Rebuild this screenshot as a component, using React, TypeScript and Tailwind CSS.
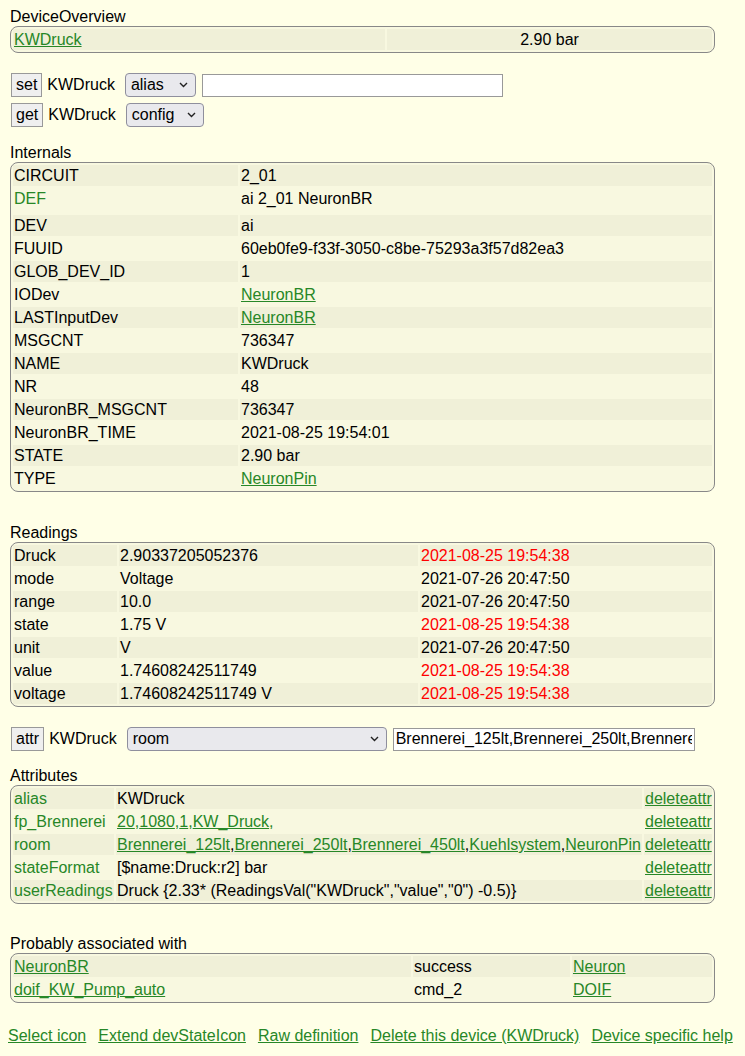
import React from "react";

const LINK = "text-[#278727] underline";
const CELL = "h-[21px] px-[1px] py-0 leading-[21px] whitespace-nowrap overflow-hidden align-middle";

function Heading({ children }: { children: React.ReactNode }) {
  return <div className="leading-[18px]">{children}</div>;
}

function Block({ children }: { children: React.ReactNode }) {
  return (
    <table className="w-[705px] table-fixed border-separate border-spacing-[2px] rounded-[8px] border border-[#888] bg-[#F8F8E0]">
      <tbody>{children}</tbody>
    </table>
  );
}

function rowBg(i: number) {
  return i % 2 === 0 ? "bg-[#F0F0D8]" : "bg-[#F8F8E0]";
}

function Chevron() {
  return (
    <svg width="9" height="6" viewBox="0 0 9 6" className="shrink-0">
      <path d="M1 1l3.5 3.5L8 1" fill="none" stroke="#222" strokeWidth="1.4" />
    </svg>
  );
}

function Select({ value, width }: { value: string; width: string }) {
  return (
    <div
      className={`flex h-[24px] items-center justify-between rounded-[4px] border border-[#8f8f9d] bg-[#e9e9ed] pl-[5px] pr-[7px] ${width}`}
    >
      <span>{value}</span>
      <Chevron />
    </div>
  );
}

function Btn({ label }: { label: string }) {
  return (
    <button className="ml-[1px] h-[24px] border border-[#999] bg-[#efefef] px-[4px] leading-[22px]">
      {label}
    </button>
  );
}

const internals: [string, React.ReactNode][] = [
  ["CIRCUIT", "2_01"],
  ["DEF", "ai 2_01 NeuronBR"],
  ["DEV", "ai"],
  ["FUUID", "60eb0fe9-f33f-3050-c8be-75293a3f57d82ea3"],
  ["GLOB_DEV_ID", "1"],
  ["IODev", <a className={LINK}>NeuronBR</a>],
  ["LASTInputDev", <a className={LINK}>NeuronBR</a>],
  ["MSGCNT", "736347"],
  ["NAME", "KWDruck"],
  ["NR", "48"],
  ["NeuronBR_MSGCNT", "736347"],
  ["NeuronBR_TIME", "2021-08-25 19:54:01"],
  ["STATE", "2.90 bar"],
  ["TYPE", <a className={LINK}>NeuronPin</a>],
];

const readings: [string, string, string, boolean][] = [
  ["Druck", "2.90337205052376", "2021-08-25 19:54:38", true],
  ["mode", "Voltage", "2021-07-26 20:47:50", false],
  ["range", "10.0", "2021-07-26 20:47:50", false],
  ["state", "1.75 V", "2021-08-25 19:54:38", true],
  ["unit", "V", "2021-07-26 20:47:50", false],
  ["value", "1.74608242511749", "2021-08-25 19:54:38", true],
  ["voltage", "1.74608242511749 V", "2021-08-25 19:54:38", true],
];

const attributes: [string, React.ReactNode][] = [
  ["alias", "KWDruck"],
  [
    "fp_Brennerei",
    <span className="text-[#278727]">
      <a className="underline">20</a>,<a className="underline">1080</a>,<a className="underline">1</a>,
      <a className="underline">KW_Druck</a>,
    </span>,
  ],
  [
    "room",
    <span>
      <a className={LINK}>Brennerei_125lt</a>,<a className={LINK}>Brennerei_250lt</a>,
      <a className={LINK}>Brennerei_450lt</a>,<a className={LINK}>Kuehlsystem</a>,
      <a className={LINK}>NeuronPin</a>
    </span>,
  ],
  ["stateFormat", "[$name:Druck:r2] bar"],
  ["userReadings", 'Druck {2.33* (ReadingsVal("KWDruck","value","0") -0.5)}'],
];

const associated: [string, string, string][] = [
  ["NeuronBR", "success", "Neuron"],
  ["doif_KW_Pump_auto", "cmd_2", "DOIF"],
];

export default function App() {
  return (
    <div className="min-h-[1056px] bg-[#FFFFE7] pl-[10px] pt-[8px] font-['Liberation_Sans',Arial,sans-serif] text-[16px] text-black">
      <Heading>DeviceOverview</Heading>
      <Block>
        <tr>
          <td className={`${CELL} w-[372px] bg-[#F0F0D8]`}>
            <a className={LINK}>KWDruck</a>
          </td>
          <td className={`${CELL} bg-[#F0F0D8] text-center`}>2.90 bar</td>
        </tr>
      </Block>

      <div className="mt-[20px] flex h-[24px] items-center">
        <Btn label="set" />
        <span className="ml-[5px]">KWDruck</span>
        <div className="ml-[10px]">
          <Select value="alias" width="w-[71px]" />
        </div>
        <input
          className="ml-[6px] h-[23px] w-[301px] border border-[#999] bg-white px-[2px]"
          defaultValue=""
        />
      </div>
      <div className="mt-[6px] flex h-[24px] items-center">
        <Btn label="get" />
        <span className="ml-[5px]">KWDruck</span>
        <div className="ml-[10px]">
          <Select value="config" width="w-[78px]" />
        </div>
      </div>

      <div className="mt-[17px]">
        <Heading>Internals</Heading>
      </div>
      <Block>
        {internals.map(([k, v], i) => (
          <tr key={k}>
            <td
              className={`${CELL} ${k === "DEF" ? "h-[25px] align-top text-[#278727]" : ""} w-[225px] ${rowBg(i)}`}
            >
              {k}
            </td>
            <td className={`${CELL} ${k === "DEF" ? "h-[25px] align-top" : ""} ${rowBg(i)}`}>{v}</td>
          </tr>
        ))}
      </Block>

      <div className="mt-[32px]">
        <Heading>Readings</Heading>
      </div>
      <Block>
        {readings.map(([k, v, t, red], i) => (
          <tr key={k}>
            <td className={`${CELL} w-[104px] ${rowBg(i)}`}>{k}</td>
            <td className={`${CELL} w-[299px] ${rowBg(i)}`}>{v}</td>
            <td className={`${CELL} ${rowBg(i)} ${red ? "text-[#ff0000]" : ""}`}>{t}</td>
          </tr>
        ))}
      </Block>

      <div className="mt-[20px] flex h-[24px] items-center">
        <Btn label="attr" />
        <span className="ml-[5px]">KWDruck</span>
        <div className="ml-[10px]">
          <Select value="room" width="w-[260px]" />
        </div>
        <input
          className="ml-[6px] h-[23px] w-[302px] border border-[#999] bg-white px-[2px]"
          defaultValue="Brennerei_125lt,Brennerei_250lt,Brennerei_450lt,Kuehlsystem,NeuronPin"
        />
      </div>

      <div className="mt-[16px]">
        <Heading>Attributes</Heading>
      </div>
      <Block>
        {attributes.map(([k, v], i) => (
          <tr key={k}>
            <td className={`${CELL} w-[101px] text-[#278727] ${rowBg(i)}`}>{k}</td>
            <td className={`${CELL} w-[526px] ${rowBg(i)}`}>{v}</td>
            <td className={`${CELL} ${rowBg(i)}`}>
              <a className={LINK}>deleteattr</a>
            </td>
          </tr>
        ))}
      </Block>

      <div className="mt-[31px]">
        <Heading>Probably associated with</Heading>
      </div>
      <Block>
        {associated.map(([a, b, c], i) => (
          <tr key={a}>
            <td className={`${CELL} w-[398px] ${rowBg(i)}`}>
              <a className={LINK}>{a}</a>
            </td>
            <td className={`${CELL} w-[157px] ${rowBg(i)}`}>{b}</td>
            <td className={`${CELL} ${rowBg(i)}`}>
              <a className={LINK}>{c}</a>
            </td>
          </tr>
        ))}
      </Block>

      <div className="-ml-[2px] mt-[24px] flex gap-[12px] leading-[18px]">
        <a className={LINK}>Select icon</a>
        <a className={LINK}>Extend devStateIcon</a>
        <a className={LINK}>Raw definition</a>
        <a className={LINK}>Delete this device (KWDruck)</a>
        <a className={LINK}>Device specific help</a>
      </div>
    </div>
  );
}
